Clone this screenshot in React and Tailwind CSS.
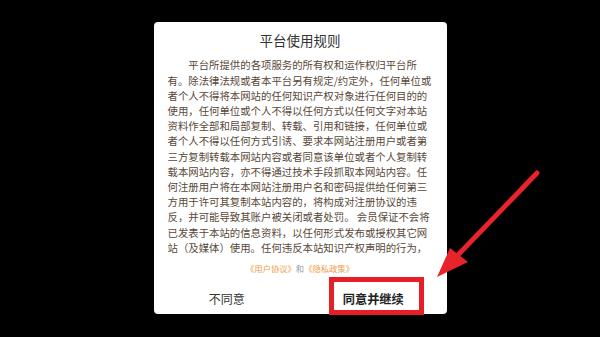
import React from "react";

const rules =
  "平台所提供的各项服务的所有权和运作权归平台所有。除法律法规或者本平台另有规定/约定外，任何单位或者个人不得将本网站的任何知识产权对象进行任何目的的使用，任何单位或个人不得以任何方式以任何文字对本站资料作全部和局部复制、转载、引用和链接，任何单位或者个人不得以任何方式引诱、要求本网站注册用户或者第三方复制转载本网站内容或者同意该单位或者个人复制转载本网站内容，亦不得通过技术手段抓取本网站内容。任何注册用户将在本网站注册用户名和密码提供给任何第三方用于许可其复制本站内容的，将构成对注册协议的违反，并可能导致其账户被关闭或者处罚。 会员保证不会将已发表于本站的信息资料，以任何形式发布或授权其它网站（及媒体）使用。任何违反本站知识产权声明的行为，";

function App() {
  return (
    <section
      className="relative w-[600px] h-[337px] bg-black overflow-hidden flex justify-center"
      style={{ fontFamily: '"Noto Sans CJK SC", "Noto Sans", sans-serif' }}
    >
      {/* Dialog */}
      <div className="mt-[22px] w-[293px] h-[291.5px] bg-white rounded-[4px] flex flex-col">
        <h1 className="pt-[8px] h-[28px] text-center text-[13.5px] leading-[20px] text-[#333]">
          平台使用规则
        </h1>

        <div className="mt-[7.4px] px-[14px] h-[197.6px]">
          <p className="text-[10.4px] leading-[15.2px] text-[#584838] indent-[2em]">
            {rules}
          </p>
        </div>

        <div className="mt-[6.7px] flex justify-center text-[8.3px] leading-[12px]">
          <span className="text-[#f29b45]">《用户协议》</span>
          <span className="text-[#9a9a9a]">和</span>
          <span className="text-[#f29b45]">《隐私政策》</span>
        </div>

        {/* Buttons */}
        <div className="mt-[10.8px] h-[29px] flex">
          <button className="flex-1 text-[12px] text-[#333]">不同意</button>
          <button className="relative flex-1 text-[12.2px] font-bold text-[#222]">
            同意并继续
            <span className="absolute left-[29px] top-[-7px] w-[95px] h-[38px] border-[5px] border-[#e61e28]" />
          </button>
        </div>
      </div>

      {/* Annotation arrow */}
      <svg
        className="absolute left-0 top-0 pointer-events-none"
        width="600"
        height="337"
        viewBox="0 0 600 337"
      >
        <line
          x1="537"
          y1="173"
          x2="456"
          y2="257"
          stroke="#e8232a"
          strokeWidth="5"
          strokeLinecap="round"
        />
        <polygon points="437,277 450,248 468,262" fill="#e8232a" />
      </svg>
    </section>
  );
}

export default App;
